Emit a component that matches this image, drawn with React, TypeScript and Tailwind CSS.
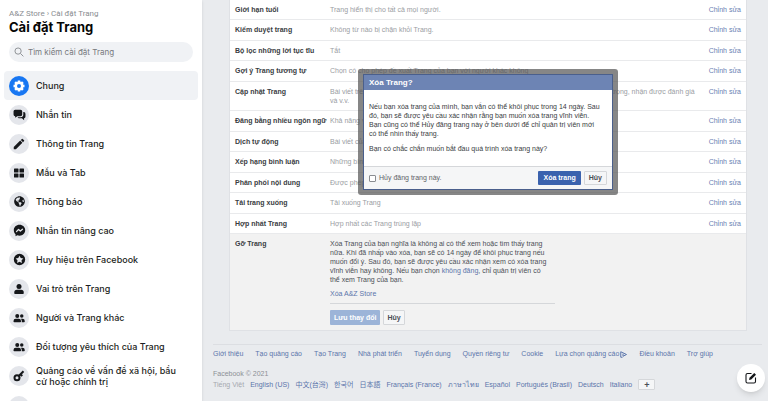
import {ReactNode, useState} from "react";
import {FaGlobeAmericas} from "react-icons/fa";
import {MdEdit} from "react-icons/md";

interface ISetting {
    label: string
    value: string
}

interface IMenuItem {
    label: string
    icon: ReactNode
}

const settings: ISetting[] = [
    {label: "Giới hạn tuổi", value: "Trang hiển thị cho tất cả mọi người."},
    {label: "Kiểm duyệt trang", value: "Không từ nào bị chặn khỏi Trang."},
    {label: "Bộ lọc những lời tục tĩu", value: "Tắt"},
    {label: "Gợi ý Trang tương tự", value: "Chọn có cho phép đề xuất Trang của bạn với người khác không"},
    {label: "Cập nhật Trang", value: "Bài viết trên Trang tự động hiển thị khi bạn cập nhật thông tin Trang, đạt các cột mốc quan trọng, nhận được đánh giá và v.v."},
    {label: "Đăng bằng nhiều ngôn ngữ", value: "Khả năng viết bài bằng nhiều ngôn ngữ"},
    {label: "Dịch tự động", value: "Bài viết của bạn có thể hiển thị bản dịch"},
    {label: "Xếp hạng bình luận", value: "Những bình luận phù hợp nhất"},
    {label: "Phân phối nội dung", value: "Được phép tải xuống"},
    {label: "Tải trang xuống", value: "Tải xuống Trang"},
    {label: "Hợp nhất Trang", value: "Hợp nhất các Trang trùng lặp"},
]

const footerLinks = ["Giới thiệu", "Tạo quảng cáo", "Tạo Trang", "Nhà phát triển", "Tuyển dụng", "Quyền riêng tư",
    "Cookie", "Lựa chọn quảng cáo", "Điều khoản", "Trợ giúp"]

const languages = ["English (US)", "中文(台灣)", "한국어", "日本語", "Français (France)", "ภาษาไทย", "Español",
    "Português (Brasil)", "Deutsch", "Italiano"]

function GearIcon() {
    return (
        <svg viewBox="0 0 24 24" className="size-[12px]" fill="none" stroke="currentColor">
            <circle cx="12" cy="12" r="6.500" strokeWidth="5"/>
            <path strokeWidth="5" d="M12 1v4M12 19v4M1 12h4M19 12h4M4.200 4.200L7 7M17 17l2.800 2.800M4.200 19.800L7 17M17 7l2.800-2.800"/>
        </svg>
    )
}

function ChatsIcon() {
    return (
        <svg viewBox="0 0 24 24" className="size-[13px]" fill="currentColor">
            <path d="M4 3h10a3 3 0 0 1 3 3v6a3 3 0 0 1-3 3H8l-4 3v-3a3 3 0 0 1-3-3V6a3 3 0 0 1 3-3z"/>
            <path d="M19 7.500a3.500 3.500 0 0 1 4 3.500v5a3 3 0 0 1-2.500 3v3.500L16.500 19H11a3 3 0 0 1-2.500-2H14a5 5 0 0 0 5-5z"/>
        </svg>
    )
}

function GridIcon() {
    return (
        <svg viewBox="0 0 24 24" className="size-[12px]" fill="currentColor">
            <rect x="2" y="3" width="9" height="8" rx="1"/>
            <rect x="13" y="3" width="9" height="8" rx="1"/>
            <rect x="2" y="13" width="9" height="8" rx="1"/>
            <rect x="13" y="13" width="9" height="8" rx="1"/>
        </svg>
    )
}

function MessengerIcon() {
    return (
        <svg viewBox="0 0 24 24" className="size-[13px]">
            <path fill="currentColor" d="M12 1.500C5.900 1.500 1.500 5.900 1.500 11.600c0 3 1.200 5.500 3.200 7.300V22.500l3.300-1.600c1.200.4 2.600.6 4 .6 6.100 0 10.500-4.300 10.500-9.900S18.100 1.500 12 1.500z"/>
            <path fill="none" stroke="#e4e6eb" strokeWidth="2.400" strokeLinecap="round" strokeLinejoin="round" d="M6.500 14l3.700-4 3.400 3 3.900-3.500"/>
        </svg>
    )
}

function BadgeIcon() {
    return (
        <svg viewBox="0 0 24 24" className="size-[13px]" fill="currentColor">
            <path fillRule="evenodd" d="M12 1.500a10.500 10.500 0 1 0 0 21 10.500 10.500 0 0 0 0-21zM12 5l2.300 4.200 4.800.8-3.400 3.500.7 4.900-4.400-2.200-4.400 2.200.7-4.900L4.900 10l4.800-.8z"/>
        </svg>
    )
}

function PersonIcon() {
    return (
        <svg viewBox="0 0 24 24" className="size-[12px]" fill="currentColor">
            <circle cx="12" cy="7" r="5"/>
            <path d="M8 13.500h8a5.500 5.500 0 0 1 5.500 5.500v1.500a1.500 1.500 0 0 1-1.500 1.500H4a1.500 1.500 0 0 1-1.500-1.500V19A5.500 5.500 0 0 1 8 13.500z"/>
        </svg>
    )
}

function PeopleIcon() {
    return (
        <svg viewBox="0 0 24 24" className="size-[12px]" fill="currentColor">
            <circle cx="8.500" cy="8" r="4"/>
            <circle cx="17.500" cy="8" r="3.500"/>
            <path d="M5.500 13.500h6a4.500 4.500 0 0 1 4.500 4.500v1a1.500 1.500 0 0 1-1.500 1.500h-12A1.500 1.500 0 0 1 1 19v-1a4.500 4.500 0 0 1 4.500-4.500z"/>
            <path d="M15.500 13.500h3.500a4.500 4.500 0 0 1 4.500 4.500v1a1.500 1.500 0 0 1-1.500 1.500h-4.500V18a6 6 0 0 0-2-4.500z"/>
        </svg>
    )
}

function KeyIcon() {
    return (
        <svg viewBox="0 0 24 24" className="size-[12px]" fill="none" stroke="currentColor" strokeWidth="4">
            <circle cx="8" cy="15.500" r="5"/>
            <path d="M11.500 12L21 2.500M15 8.500l3.500 3.500"/>
        </svg>
    )
}

const menu: IMenuItem[] = [
    {label: "Chung", icon: <GearIcon/>},
    {label: "Nhắn tin", icon: <ChatsIcon/>},
    {label: "Thông tin Trang", icon: <MdEdit size={14}/>},
    {label: "Mẫu và Tab", icon: <GridIcon/>},
    {label: "Thông báo", icon: <FaGlobeAmericas size={11}/>},
    {label: "Nhắn tin nâng cao", icon: <MessengerIcon/>},
    {label: "Huy hiệu trên Facebook", icon: <BadgeIcon/>},
    {label: "Vai trò trên Trang", icon: <PersonIcon/>},
    {label: "Người và Trang khác", icon: <PeopleIcon/>},
    {label: "Đối tượng yêu thích của Trang", icon: <PeopleIcon/>},
    {label: "Quảng cáo về vấn đề xã hội, bầu cử hoặc chính trị", icon: <KeyIcon/>},
    {label: "", icon: null},
]

function Sidebar() {
    return (
        <aside className="z-10 w-[202px] shrink-0 overflow-hidden bg-white px-1 pt-2 shadow">
            <div className="px-[5px]">
                <nav className="font-['Roboto',sans-serif] text-[8px] leading-[12px] text-[#8a8d91]">
                    <a href="#">A&amp;Z Store</a> › <a href="#">Cài đặt Trang</a>
                </nav>
                <h1 className="text-[13px] leading-[14px] font-bold text-[#050505]">Cài đặt Trang</h1>
                <label className="mt-2 flex h-[20px] items-center gap-1 rounded-full bg-[#f0f2f5] px-[5px] text-[#8a8d91]">
                    <svg viewBox="0 0 16 16" className="size-[10px] shrink-0" fill="none" stroke="currentColor" strokeWidth="1.5">
                        <circle cx="6.500" cy="6.500" r="5"/>
                        <path d="M10.500 10.500L15 15"/>
                    </svg>
                    <input type="search" aria-label="Tìm kiếm cài đặt Trang" placeholder="Tìm kiếm cài đặt Trang"
                           className="w-full min-w-0 bg-transparent text-[8px] outline-none placeholder:text-[#77797d]"/>
                </label>
            </div>
            <ul className="mt-[9px]">
                {menu.map((item, i) => (
                    <li key={i}>
                        <a href="#" className={`flex min-h-[29px] items-center gap-[7px] rounded-[4px] py-1 pr-4 pl-[5px] ${i === 0 ? "bg-[#f0f2f5]" : ""}`}>
                            <span className={`flex size-[20px] shrink-0 items-center justify-center rounded-full ${i === 0 ? "bg-[#1877f2] text-white" : "bg-[#e4e6eb] text-[#15171a]"}`}>
                                {item.icon}
                            </span>
                            <span className="text-[9px] leading-[11px] font-medium text-[#1c1e21]">{item.label}</span>
                        </a>
                    </li>
                ))}
            </ul>
        </aside>
    )
}

function DeleteDialog({onClose}: {onClose: () => void}) {
    const [unpublish, setUnpublish] = useState<boolean>(false);

    return (
        <div role="dialog" aria-labelledby="delete-title"
             className="absolute top-[69px] left-1/2 w-[260px] -translate-x-1/2 rounded-[3px] bg-[#525252]/70 p-[5px]">
            <div className="border border-[#4a5f8c] bg-white">
                <h2 id="delete-title" className="bg-[#6d84b4] px-[5px] text-[8px] leading-[15px] font-bold text-white">Xóa Trang?</h2>
                <div className="pt-3 pr-[10px] pb-[13px] pl-[5px] leading-[9px] text-[#3a3d42]">
                    <p>Nếu bạn xóa trang của mình, bạn vẫn có thể khôi phục trong 14 ngày. Sau đó, bạn sẽ được yêu cầu xác nhận rằng bạn muốn xóa trang vĩnh viễn. Bạn cũng có thể Hủy đăng trang này ở bên dưới để chỉ quản trị viên mới có thể nhìn thấy trang.</p>
                    <p className="mt-[6px]">Bạn có chắc chắn muốn bắt đầu quá trình xóa trang này?</p>
                </div>
                <div className="flex items-center gap-[3px] border-t border-[#d5d7da] bg-[#f5f6f7] px-[5px] py-1">
                    <label className="mr-auto flex items-center gap-[3px] text-[#606368]">
                        <input type="checkbox" checked={unpublish} onChange={() => setUnpublish(!unpublish)}
                               className="size-[7px] appearance-none rounded-[1px] border border-[#8a8d91] bg-white checked:bg-[#3b5998]"/>
                        Hủy đăng trang này.
                    </label>
                    <button type="button" onClick={onClose} className="h-[14px] rounded-[1px] bg-[#3a62ae] px-[5px] font-bold text-white">Xóa trang</button>
                    <button type="button" onClick={onClose} className="h-[14px] rounded-[1px] border border-[#d5d7da] bg-[#f5f6f7] px-1 font-bold text-[#4b4f56]">Hủy</button>
                </div>
            </div>
        </div>
    )
}

function Footer() {
    return (
        <footer className="mt-[13px] mr-[6px] ml-[11px] border-t border-[#dcdee2] pt-1 leading-[10px] text-[#5b75ab]">
            <ul className="flex gap-3 whitespace-nowrap">
                {footerLinks.map((link) => (
                    <li key={link}>
                        <a href="#" className="flex items-center">
                            {link}
                            {link === "Lựa chọn quảng cáo" && (
                                <svg viewBox="0 0 14 14" className="ml-px size-[7px] shrink-0" fill="none" stroke="currentColor" strokeWidth="2">
                                    <path d="M5 12.500H1.500V1.500L13 7l-7 3.500V5.500"/>
                                </svg>
                            )}
                        </a>
                    </li>
                ))}
            </ul>
            <p className="mt-[10px] text-[#8d9096]">Facebook © 2021</p>
            <ul className="flex items-center gap-[6px] whitespace-nowrap">
                <li className="text-[#a5a8ae]">Tiếng Việt</li>
                {languages.map((lang) => <li key={lang}><a href="#">{lang}</a></li>)}
                <li>
                    <button type="button" aria-label="+" className="flex h-[11px] w-[17px] items-center justify-center rounded-[1px] border border-[#d5d7da] bg-[#f5f6f7] text-[9px] font-bold text-[#4b4f56]">+</button>
                </li>
            </ul>
        </footer>
    )
}

export default function App() {

    const [dialogOpen, setDialogOpen] = useState<boolean>(true);

    return (
        <div className="flex h-screen overflow-hidden bg-[#e9ebee] font-['Inter',sans-serif] text-[7px]">
            <Sidebar/>
            <main className="min-w-0 flex-1 font-['Liberation_Sans','Noto_Sans_CJK_TC','Noto_Sans_CJK_KR',sans-serif]">
                <section className="relative mr-[21px] ml-[27px] border-x border-b border-[#dfe1e5] bg-white">
                    <ul>
                        {settings.map((item) => (
                            <li key={item.label} className="flex border-b border-[#e9eaec] px-[5px] pt-[5px] leading-[9px] odd:pb-[5px] even:pb-[6px]">
                                <span className="w-[95px] shrink-0 font-bold whitespace-nowrap text-[#3a3d42]">{item.label}</span>
                                <span className="flex-1 pr-3 text-[#9a9da3]">{item.value}</span>
                                <a href="#" className="shrink-0 text-[#6880b3]">Chỉnh sửa</a>
                            </li>
                        ))}
                    </ul>
                    <div className="flex bg-[#f2f2f2] px-[5px] pt-[5px] pb-[5px] leading-[9px]">
                        <h2 className="w-[95px] shrink-0 font-bold text-[#3a3d42]">Gỡ Trang</h2>
                        <div className="w-[225px] text-[#4b4f56]">
                            <p className="pr-[6px]">Xóa Trang của bạn nghĩa là không ai có thể xem hoặc tìm thấy trang nữa. Khi đã nhấp vào xóa, bạn sẽ có 14 ngày để khôi phục trang nếu muốn đổi ý. Sau đó, bạn sẽ được yêu cầu xác nhận xem có xóa trang vĩnh viễn hay không. Nếu bạn chọn <a href="#" className="text-[#5b75ab]">không đăng</a>, chỉ quản trị viên có thể xem Trang của bạn.</p>
                            <button type="button" onClick={() => setDialogOpen(true)} className="mt-[5px] block text-[#5b75ab]">Xóa A&amp;Z Store</button>
                            <div className="mt-[5px] flex gap-[3px] border-t border-[#d5d7da] pt-[6px]">
                                <button type="button" className="h-[15px] rounded-[1px] bg-[#9cb4d8] px-1 font-bold text-white">Lưu thay đổi</button>
                                <button type="button" className="h-[15px] rounded-[1px] border border-[#d5d7da] bg-[#f5f6f7] px-[3px] font-bold text-[#4b4f56]">Hủy</button>
                            </div>
                        </div>
                    </div>
                    {dialogOpen && <DeleteDialog onClose={() => setDialogOpen(false)}/>}
                </section>
                <Footer/>
            </main>
            <button type="button" aria-label="Tin nhắn mới" className="fixed right-[3px] bottom-[9px] flex size-[28px] items-center justify-center rounded-full bg-white text-[#15171a] shadow-md">
                <svg viewBox="0 0 24 24" className="size-[12px]" fill="none" stroke="currentColor" strokeWidth="2.200">
                    <path d="M13 3H5a3 3 0 0 0-3 3v13a3 3 0 0 0 3 3h13a3 3 0 0 0 3-3v-8"/>
                    <path fill="currentColor" stroke="none" d="M8 16l1-4.500L18.500 2l3.500 3.500-9.500 9.500z"/>
                </svg>
            </button>
        </div>
    )
}
